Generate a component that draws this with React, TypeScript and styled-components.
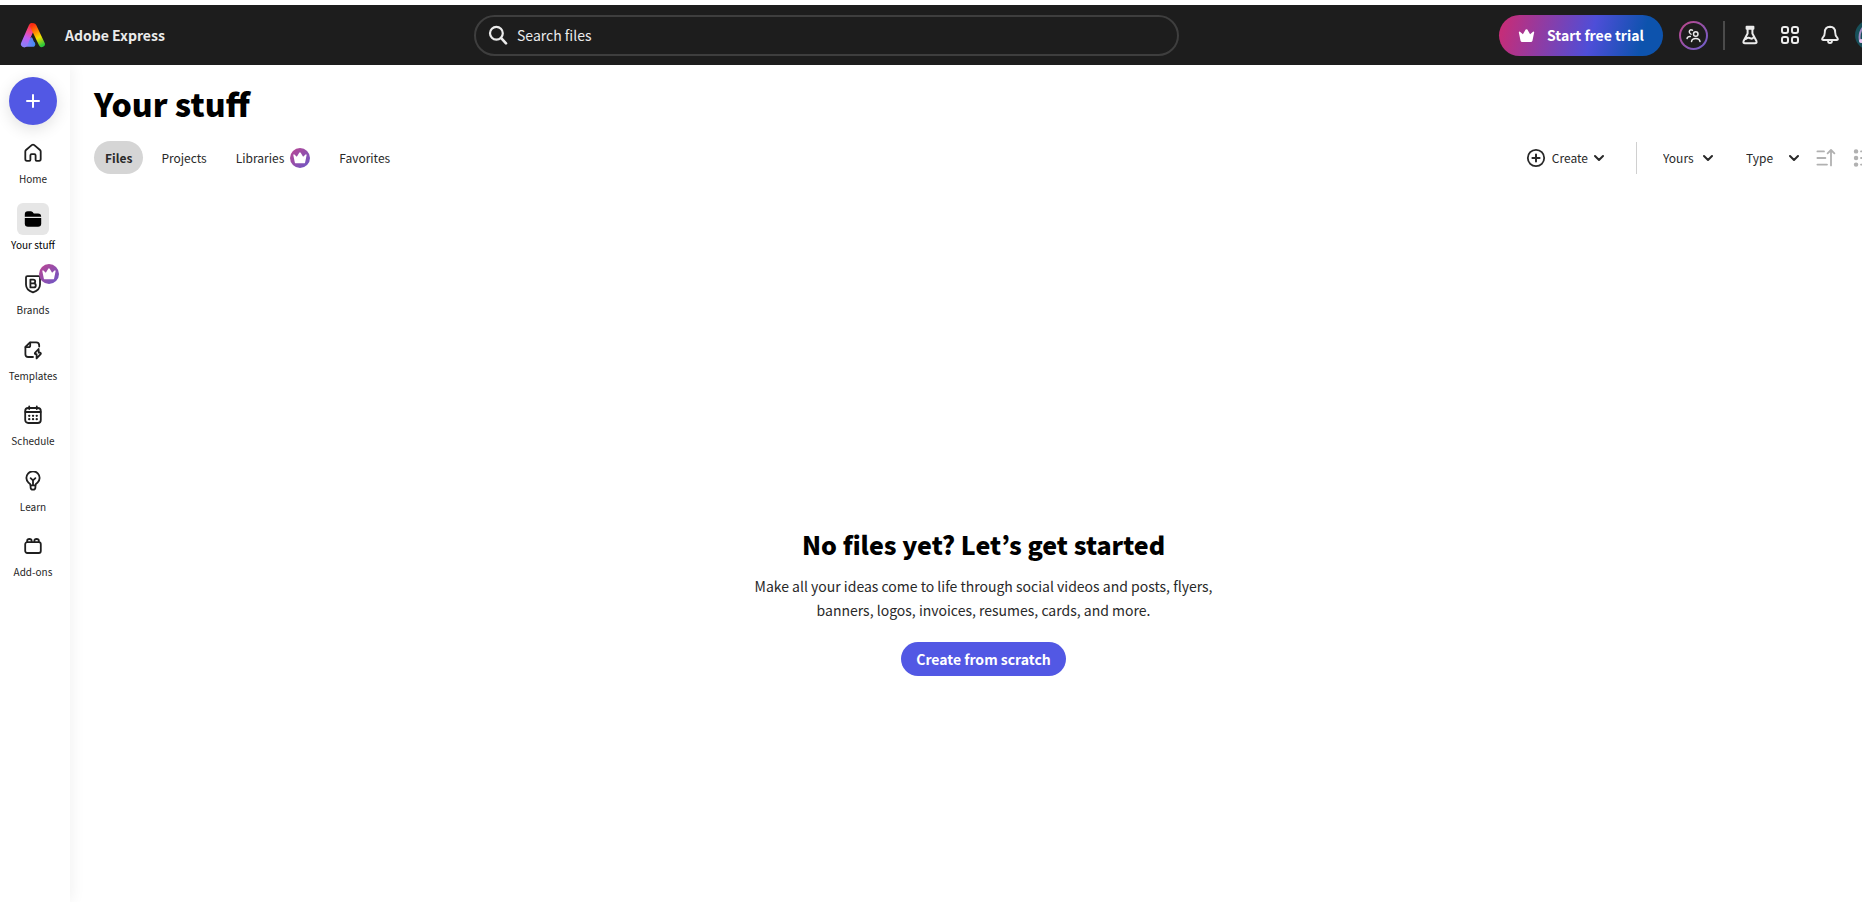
import React from "react";
import styled, { createGlobalStyle } from "styled-components";

const Global = createGlobalStyle`
  *, *::before, *::after { box-sizing: border-box; }
  html, body { margin: 0; background: #fff; }
  body {
    overflow-x: hidden;
    font-family: "Noto Sans CJK KR", "Open Sans", sans-serif;
    font-size: 14px;
    color: #292929;
  }
  button, input, select { font: inherit; color: inherit; }
  button { border: 0; padding: 0; background: none; cursor: pointer; }
  a { color: inherit; text-decoration: none; }
  h1, h2, p, ul { margin: 0; padding: 0; }
  svg { display: block; flex: none; }
`;

/* The shell is a little wider than the window; the right edge is cut off. */
const Shell = styled.div`
  display: flex;
  flex-direction: column;
  width: calc(100% + 33px);
  min-height: 100vh;
  padding-top: 5px;
`;

const Header = styled.header`
  display: grid;
  grid-template-columns: minmax(0, 1fr) minmax(300px, 705px) minmax(0, 1fr);
  align-items: center;
  height: 60px;
  padding: 0 10px 0 20px;
  background: #1d1d1d;
  color: #ebebeb;
`;

const Brand = styled.a`
  display: flex;
  align-items: center;
  gap: 19px;
  font-weight: 700;
  line-height: 20px;
`;

const SearchBox = styled.label`
  display: flex;
  align-items: center;
  gap: 9px;
  height: 41px;
  margin-left: -126px;
  margin-right: 126px;
  padding: 0 12px;
  border: 2px solid #3e3e3e;
  border-radius: 21px;
`;

const SearchInput = styled.input`
  flex: 1;
  min-width: 0;
  height: 24px;
  padding: 0;
  border: 0;
  outline: 0;
  background: transparent;
  &::placeholder { color: #ebebeb; opacity: 1; }
`;

const HeaderActions = styled.div`
  display: flex;
  align-items: center;
  justify-content: flex-end;
  white-space: nowrap;
`;

const TrialButton = styled.button`
  display: flex;
  align-items: center;
  justify-content: center;
  gap: 12px;
  width: 164px;
  height: 41px;
  border-radius: 21px;
  background: linear-gradient(105deg, #c42d79 4%, #4e4ed8 56%, #0d53ad 86%);
  color: #fff;
  font-weight: 700;
`;

const InviteButton = styled.button`
  display: grid;
  place-items: center;
  width: 29px;
  height: 29px;
  margin-left: 16px;
  border: 2px solid transparent;
  border-radius: 50%;
  background:
    linear-gradient(#1d1d1d, #1d1d1d) padding-box,
    linear-gradient(135deg, #c04587, #6a60cf) border-box;
`;

const HeaderRule = styled.span`
  width: 2px;
  height: 29px;
  margin: 0 13px 0 15px;
  background: #4b4b4b;
`;

const HeaderIcons = styled.div`
  display: flex;
  gap: 16px;
`;

const HeaderIcon = styled.button`
  display: grid;
  place-items: center;
  width: 24px;
  height: 30px;
`;

const AvatarButton = styled.button`
  width: 30px;
  height: 30px;
  margin-left: 13px;
`;

const Body = styled.div`
  display: flex;
  flex: 1;
`;

const Sidebar = styled.nav`
  display: flex;
  flex-direction: column;
  align-items: center;
  flex: none;
  width: 70px;
  padding: 12px 4px 0 0;
  background: #fff;
  box-shadow: 2px 0 14px rgba(0, 0, 0, 0.06);
  clip-path: inset(0 -20px 0 0);
`;

const AddButton = styled.button`
  display: grid;
  place-items: center;
  width: 48px;
  height: 48px;
  border-radius: 50%;
  background: #5258e4;
  box-shadow: 0 4px 16px rgba(0, 0, 0, 0.12);
`;

const NavList = styled.ul`
  display: grid;
  grid-auto-rows: 1fr;
  width: 100%;
  height: 459px;
  margin-top: 12px;
  list-style: none;
`;

const NavLink = styled.a<{ $active?: boolean }>`
  display: flex;
  flex-direction: column;
  align-items: center;
  gap: 2px;
  font-size: 10px;
  line-height: 16px;
  white-space: nowrap;
  color: ${(p) => (p.$active ? "#000" : "#1f1f1f")};
`;

const NavIcon = styled.span<{ $active?: boolean }>`
  position: relative;
  display: grid;
  place-items: center;
  width: 32px;
  height: 32px;
  border-radius: 6px;
  background: ${(p) => (p.$active ? "#e6e6e6" : "transparent")};
`;

const NavBadge = styled.span`
  position: absolute;
  top: -4px;
  right: -10px;
`;

const Main = styled.main`
  display: flex;
  flex: 1;
  flex-direction: column;
  min-width: 0;
  padding: 18px 22px 0 24px;
`;

const Title = styled.h1`
  font-size: 32px;
  font-weight: 900;
  line-height: 40px;
  color: #000;
`;

const Toolbar = styled.div`
  display: flex;
  align-items: center;
  justify-content: space-between;
  height: 33px;
  margin-top: 18px;
  font-size: 12px;
  line-height: 20px;
`;

const Tabs = styled.div`
  display: flex;
  height: 100%;
  gap: 7px;
`;

const Tab = styled.button<{ $active?: boolean }>`
  display: flex;
  align-items: center;
  gap: 6px;
  padding: 0 11px;
  border-radius: 17px;
  background: ${(p) => (p.$active ? "#d5d5d5" : "transparent")};
  font-weight: ${(p) => (p.$active ? 700 : 400)};
`;

const Filters = styled.div`
  display: flex;
  align-items: center;
  height: 100%;
`;

const CreateButton = styled.button`
  display: flex;
  align-items: center;
  gap: 6px;
`;

const FilterRule = styled.span`
  width: 1px;
  height: 32px;
  margin: 0 26px 0 32px;
  background: #d0d0d0;
`;

const SelectWrap = styled.label<{ $width: number; $gap: number }>`
  display: grid;
  grid-template-columns: 1fr 10px;
  align-items: center;
  width: ${(p) => p.$width}px;
  margin-right: ${(p) => p.$gap}px;
  > * { grid-row: 1; }
  > svg { grid-column: 2; pointer-events: none; }
`;

const Select = styled.select`
  grid-column: 1 / -1;
  appearance: none;
  width: 100%;
  padding: 0;
  border: 0;
  background: transparent;
`;

const ViewButtons = styled.div`
  display: flex;
  gap: 17px;
  color: #b1b1b1;
`;

const EmptyState = styled.section`
  display: flex;
  flex: 1;
  flex-direction: column;
  align-items: center;
  justify-content: center;
  padding-top: 128px;
  text-align: center;
`;

const EmptyTitle = styled.h2`
  font-size: 25px;
  font-weight: 900;
  line-height: 32px;
  color: #000;
`;

const EmptyText = styled.p`
  max-width: 480px;
  margin-top: 14px;
  line-height: 24px;
`;

const PrimaryButton = styled.button`
  width: 165px;
  height: 34px;
  margin-top: 20px;
  border-radius: 17px;
  background: #5258e4;
  color: #fff;
  font-weight: 700;
`;

const crownPath =
  "M1.6 3.2 Q0.6 3.2 0.8 4.2 L2.4 12 Q2.6 13 3.6 13 H12.4 Q13.4 13 13.6 12 L15.2 4.2 Q15.4 3.2 14.4 3.2 L11.4 5.8 L8.8 1.4 Q8 0.6 7.2 1.4 L4.6 5.8 Z";

function Crown() {
  return (
    <svg width="17" height="15" viewBox="0 0 16 14" fill="#fff" aria-hidden="true">
      <path d={crownPath} />
    </svg>
  );
}

function CrownBadge({ id }: { id: string }) {
  return (
    <svg width="20" height="20" viewBox="0 0 20 20" aria-hidden="true">
      <defs>
        <linearGradient id={id} x1="0" y1="0" x2="1" y2="1">
          <stop offset="0" stopColor="#bd4590" />
          <stop offset="1" stopColor="#6a58c8" />
        </linearGradient>
      </defs>
      <circle cx="10" cy="10" r="10" fill={`url(#${id})`} />
      <path d={crownPath} fill="#fff" transform="translate(2.6 3.4) scale(.92)" />
    </svg>
  );
}

function Logo() {
  return (
    <svg width="26" height="26" viewBox="0 0 26 26" fill="none" aria-hidden="true">
      <defs>
        <linearGradient id="lgLeft" x1="13" y1="2" x2="4" y2="23" gradientUnits="userSpaceOnUse">
          <stop offset="0" stopColor="#fb2a12" />
          <stop offset=".35" stopColor="#f5468c" />
          <stop offset=".65" stopColor="#c45cf0" />
          <stop offset="1" stopColor="#8e7cf8" />
        </linearGradient>
        <linearGradient id="lgRight" x1="12" y1="3" x2="23" y2="23" gradientUnits="userSpaceOnUse">
          <stop offset="0" stopColor="#fb2a12" />
          <stop offset=".35" stopColor="#ff8a00" />
          <stop offset=".62" stopColor="#f4e000" />
          <stop offset="1" stopColor="#2cc83c" />
        </linearGradient>
        <linearGradient id="lgBase" x1="4" y1="22" x2="15" y2="22" gradientUnits="userSpaceOnUse">
          <stop offset="0" stopColor="#9a78f8" />
          <stop offset="1" stopColor="#3f8cf4" />
        </linearGradient>
      </defs>
      <path d="M5 22 L11.4 16.6 L13.4 21.6 Z" fill="#5a84f6" stroke="#5a84f6" strokeWidth="2.4" strokeLinejoin="round" />
      <path d="M4.4 22.2 H12.6" stroke="url(#lgBase)" strokeWidth="5.2" strokeLinecap="round" />
      <path d="M12 4.4 L4.2 22" stroke="url(#lgLeft)" strokeWidth="6.6" strokeLinecap="round" />
      <path d="M13.4 4.4 L21.8 22" stroke="url(#lgRight)" strokeWidth="6.2" strokeLinecap="round" />
    </svg>
  );
}

function Icon({ size = 20, children }: { size?: number; children: React.ReactNode }) {
  return (
    <svg
      width={size}
      height={size}
      viewBox="0 0 20 20"
      fill="none"
      stroke="currentColor"
      strokeWidth="1.8"
      strokeLinecap="round"
      strokeLinejoin="round"
      aria-hidden="true"
    >
      {children}
    </svg>
  );
}

function Chevron() {
  return (
    <svg width="10" height="8" viewBox="0 0 10 8" fill="none" stroke="currentColor" strokeWidth="2" strokeLinecap="round" strokeLinejoin="round" aria-hidden="true">
      <path d="M1 2 L5 6 L9 2" />
    </svg>
  );
}

const navItems: { label: string; active?: boolean; premium?: boolean; icon: React.ReactNode }[] = [
  {
    label: "Home",
    icon: <path d="M2.3 8.6 Q2.3 7.6 3 7 L9 1.9 Q10 1.2 11 1.9 L17 7 Q17.7 7.6 17.7 8.6 V16 Q17.7 17.8 16.1 17.8 H13.6 Q12.6 17.8 12.6 16.8 V12.4 Q12.6 11.2 11.4 11.2 H8.6 Q7.4 11.2 7.4 12.4 V16.8 Q7.4 17.8 6.4 17.8 H3.9 Q2.3 17.8 2.3 16 Z" />,
  },
  {
    label: "Your stuff",
    active: true,
    icon: (
      <g fill="currentColor" stroke="none">
        <path d="M1.8 7.8 V5.2 Q1.8 2.2 4.8 2.2 H7.6 Q8.8 2.2 9.6 3.1 L10.8 4.4 H15 Q18.2 4.4 18.2 7.8 Z" />
        <path d="M1.8 9 H18.2 V14.6 Q18.2 17.8 15 17.8 H5 Q1.8 17.8 1.8 14.6 Z" />
      </g>
    ),
  },
  {
    label: "Brands",
    premium: true,
    icon: (
      <>
        <path d="M4.4 2.2 H15.6 Q17 2.2 17 3.6 V10.4 C17 14.6 14 17 10 18.4 C6 17 3 14.6 3 10.4 V3.6 Q3 2.2 4.4 2.2 Z" />
        <path d="M7.4 5.6 H10.2 Q12.2 5.6 12.2 7.5 Q12.2 9.4 10.2 9.4 H7.4 Z M7.4 9.4 H10.8 Q12.8 9.4 12.8 11.4 Q12.8 13.4 10.8 13.4 H7.4 Z" />
      </>
    ),
  },
  {
    label: "Templates",
    icon: (
      <>
        <path d="M10 17 H5.2 Q2.4 17 2.4 14.2 V7 L7 2.4 H13.2 Q16.2 2.4 16.2 5.4 V6.6" />
        <path d="M7.2 2.6 V5.4 Q7.2 7.2 5.4 7.2 H2.6" />
        <path d="M15.6 9 L12 12.8 Q11.4 14 12.6 14.2 H13.6 L13.6 18.4 L17.6 14.2 Q18.4 13 17 12.6 H15.8 Z" />
      </>
    ),
  },
  {
    label: "Schedule",
    icon: (
      <>
        <rect x="2.2" y="3" width="15.6" height="15" rx="3" />
        <path d="M2.4 7 H17.6 M6.2 1.4 V4 M13.8 1.4 V4" />
        <path d="M6.2 10.8 H6.3 M10 10.8 H10.1 M13.7 10.8 H13.8 M6.2 14.2 H6.3 M10 14.2 H10.1 M13.7 14.2 H13.8" strokeWidth="2.3" />
      </>
    ),
  },
  {
    label: "Learn",
    icon: (
      <>
        <path d="M7.6 14.4 Q7.6 13 5.6 11.8 A6.6 6.6 0 1 1 14.4 11.8 Q12.4 13 12.4 14.4 Z" />
        <path d="M7.6 14.6 V16.4 Q7.6 18.6 10 18.6 Q12.4 18.6 12.4 16.4 V14.6 M10 13.8 V9.4 M7.6 7.2 L10 9.4 L12.4 7.2" />
      </>
    ),
  },
  {
    label: "Add-ons",
    icon: (
      <>
        <rect x="2.2" y="6.2" width="15.6" height="10.8" rx="2" />
        <path d="M4.2 6 V4.6 Q4.2 3 6.4 3 Q8.6 3 8.6 4.6 V6 M11.4 6 V4.6 Q11.4 3 13.6 3 Q15.8 3 15.8 4.6 V6" />
      </>
    ),
  },
];

export default function App() {
  return (
    <>
      <Global />
      <Shell>
        <Header>
          <Brand href="#">
            <Logo />
            Adobe Express
          </Brand>
          <SearchBox>
            <Icon size={20}>
              <circle cx="8.4" cy="8.2" r="6.4" strokeWidth="2.2" />
              <path d="M13.2 13.2 L18 18.4" strokeWidth="2.6" />
            </Icon>
            <SearchInput type="text" placeholder="Search files" aria-label="Search files" />
          </SearchBox>
          <HeaderActions>
            <TrialButton>
              <Crown />
              Start free trial
            </TrialButton>
            <InviteButton aria-label="Invite people">
              <Icon size={15}>
                <g strokeWidth="2">
                  <circle cx="13" cy="8" r="3" />
                  <path d="M7.4 18 Q8 14 13 14 Q18 14 18.6 18 M8.6 3 Q5.2 1.4 4.4 4.6 Q4 7.2 6.6 8.2 M1.4 14 Q2 11.2 5.8 11.4" />
                </g>
              </Icon>
            </InviteButton>
            <HeaderRule />
            <HeaderIcons>
              <HeaderIcon aria-label="Labs">
                <Icon size={20}>
                  <path d="M6.6 1.8 H13.4 V3.8 H6.6 Z M7.6 4 V8.6 L3.6 16 Q2.8 18.2 5 18.2 H15 Q17.2 18.2 16.4 16 L12.4 8.6 V4 M5.8 14 Q8.4 12 10.4 13.4 Q12.4 14.2 13.6 12.2" strokeWidth="2" />
                </Icon>
              </HeaderIcon>
              <HeaderIcon aria-label="Apps">
                <Icon size={20}>
                  <g strokeWidth="2">
                    <rect x="2" y="2" width="6" height="6" rx="2" />
                    <rect x="12" y="2" width="6" height="6" rx="2" />
                    <rect x="2" y="12" width="6" height="6" rx="2" />
                    <rect x="12" y="12" width="6" height="6" rx="2" />
                  </g>
                </Icon>
              </HeaderIcon>
              <HeaderIcon aria-label="Notifications">
                <Icon size={20}>
                  <path d="M10 1.8 Q4.8 2 4.8 7.4 Q4.8 10.6 2.8 12.6 Q1.2 15 3.2 15 H16.8 Q18.8 15 17.2 12.6 Q15.2 10.6 15.2 7.4 Q15.2 2 10 1.8 Z M8 15.4 Q8 18 10 18 Q12 18 12 15.4" strokeWidth="1.9" />
                </Icon>
              </HeaderIcon>
            </HeaderIcons>
            <AvatarButton aria-label="Account">
              <svg width="30" height="30" viewBox="0 0 30 30" aria-hidden="true">
                <circle cx="15" cy="15" r="15" fill="#17505a" />
                <path d="M5 21 Q3 12 10 5" fill="none" stroke="#a48cc4" strokeWidth="2" />
                <circle cx="6" cy="21" r="2" fill="#e9c8f0" />
              </svg>
            </AvatarButton>
          </HeaderActions>
        </Header>
        <Body>
          <Sidebar>
            <AddButton aria-label="Create new">
              <svg width="16" height="16" viewBox="0 0 16 16" stroke="#fff" strokeWidth="2" strokeLinecap="round" aria-hidden="true">
                <path d="M8 2 V14 M2 8 H14" />
              </svg>
            </AddButton>
            <NavList>
              {navItems.map((item) => (
                <li key={item.label}>
                  <NavLink href="#" $active={item.active}>
                    <NavIcon $active={item.active}>
                      <Icon>{item.icon}</Icon>
                      {item.premium && (
                        <NavBadge>
                          <CrownBadge id="navCrown" />
                        </NavBadge>
                      )}
                    </NavIcon>
                    {item.label}
                  </NavLink>
                </li>
              ))}
            </NavList>
          </Sidebar>
          <Main>
            <Title>Your stuff</Title>
            <Toolbar>
              <Tabs>
                <Tab $active>Files</Tab>
                <Tab>Projects</Tab>
                <Tab>
                  Libraries
                  <CrownBadge id="tabCrown" />
                </Tab>
                <Tab>Favorites</Tab>
              </Tabs>
              <Filters>
                <CreateButton>
                  <Icon size={20}>
                    <circle cx="10" cy="10" r="8.2" strokeWidth="1.8" />
                    <path d="M10 6.4 V13.6 M6.4 10 H13.6" strokeWidth="2" />
                  </Icon>
                  Create
                  <Chevron />
                </CreateButton>
                <FilterRule />
                <SelectWrap $width={50} $gap={33}>
                  <Select aria-label="Owner">
                    <option>Yours</option>
                  </Select>
                  <Chevron />
                </SelectWrap>
                <SelectWrap $width={53} $gap={17}>
                  <Select aria-label="Type">
                    <option>Type</option>
                  </Select>
                  <Chevron />
                </SelectWrap>
                <ViewButtons>
                  <button aria-label="Sort order">
                    <Icon size={20}>
                      <path d="M1.4 3.4 H8 M1.4 10 H9.4 M1.4 16.6 H11 M15 17.4 V2.4 M11.6 5.4 L15 2 L18.4 5.4" />
                    </Icon>
                  </button>
                  <button aria-label="List view">
                    <Icon size={20}>
                      <path d="M8 3.4 H19 M8 10 H19 M8 16.6 H19" />
                      <path d="M3 3.4 H3.1 M3 10 H3.1 M3 16.6 H3.1" strokeWidth="4.4" />
                    </Icon>
                  </button>
                </ViewButtons>
              </Filters>
            </Toolbar>
            <EmptyState>
              <EmptyTitle>No files yet? Let’s get started</EmptyTitle>
              <EmptyText>
                Make all your ideas come to life through social videos and posts, flyers, banners,
                logos, invoices, resumes, cards, and more.
              </EmptyText>
              <PrimaryButton>Create from scratch</PrimaryButton>
            </EmptyState>
          </Main>
        </Body>
      </Shell>
    </>
  );
}
